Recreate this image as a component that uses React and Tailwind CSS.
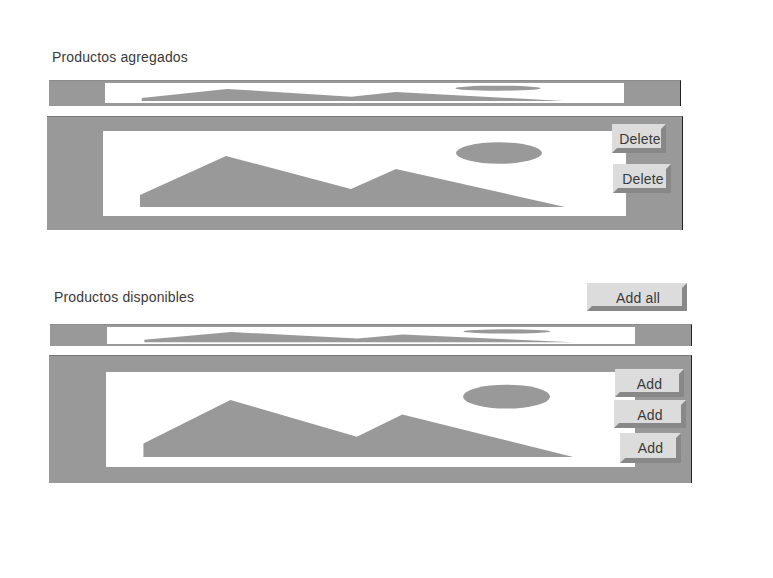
const bevel = "box-border flex items-center justify-center border-[5px] border-t-[#dcdcdc] border-l-[#dcdcdc] border-r-[#888888] border-b-[#888888] bg-[#dcdcdc] text-[14px] leading-none text-[#3a3a3a]";

function Placeholder({ className }) {
  return (
    <svg className={className} viewBox="0 0 523 85" preserveAspectRatio="none">
      <rect x="0" y="0" width="523" height="85" fill="#ffffff" />
      <polygon points="37,64 123,25 248,58 293,38 462,76 37,76" fill="#999999" />
      <ellipse cx="396" cy="22" rx="43" ry="10.7" fill="#999999" />
    </svg>
  );
}

export default function App() {
  return (
    <div className="min-h-[578px] w-[773px] bg-white pt-[49px] font-['Liberation_Sans',Arial,sans-serif] text-[14px] tracking-[0.15px] text-[#3a3a3a]">
      <section>
        <p className="ml-[52px] leading-[16px]">Productos agregados</p>
        <div className="mt-[15px] ml-[49px] h-[26px] w-[632px] border-t border-r border-t-[#8c8c8c] border-r-[#222222] bg-[#999999] pt-[2px] pl-[56px]">
          <Placeholder className="block h-[20px] w-[519px] blur-[0.4px]" />
        </div>
        <div className="relative mt-[10px] ml-[47px] h-[114px] w-[636px] border-t border-r border-t-[#777777] border-r-[#222222] bg-[#999999] pt-[14px] pl-[56px]">
          <Placeholder className="block h-[85px] w-[523px] blur-[0.4px]" />
          <div className="absolute top-[7px] left-[565px] flex flex-col items-start gap-[11px]">
            <button className={`${bevel} h-[29px] w-[54px] pl-[2px]`}>Delete</button>
            <button className={`${bevel} ml-px h-[29px] w-[58px] pl-[2px]`}>Delete</button>
          </div>
        </div>
      </section>
      <section className="mt-[53px]">
        <div className="flex h-[28px] w-[687px] items-center justify-between pl-[54px]">
          <p className="leading-[16px]">Productos disponibles</p>
          <button className={`${bevel} h-[28px] w-[100px] pt-[2px] pl-[2px]`}>Add all</button>
        </div>
        <div className="mt-[13px] ml-[50px] h-[22px] w-[642px] border-t border-r border-t-[#8c8c8c] border-r-[#222222] bg-[#999999] pt-[2px] pl-[57px]">
          <Placeholder className="block h-[17px] w-[528px] blur-[0.4px]" />
        </div>
        <div className="relative mt-[9px] ml-[49px] h-[128px] w-[643px] border-t border-r border-t-[#777777] border-r-[#222222] bg-[#999999] pt-[16px] pl-[57px]">
          <Placeholder className="block h-[95px] w-[529px] blur-[0.4px]" />
          <div className="absolute top-[13px] left-[565px] flex flex-col items-start">
            <button className={`${bevel} ml-px h-[28px] w-[69px] pt-[2px]`}>Add</button>
            <button className={`${bevel} mt-[3px] h-[28px] w-[72px] pt-[2px]`}>Add</button>
            <button className={`${bevel} mt-[5px] ml-[6px] h-[30px] w-[61px]`}>Add</button>
          </div>
        </div>
      </section>
    </div>
  );
}
